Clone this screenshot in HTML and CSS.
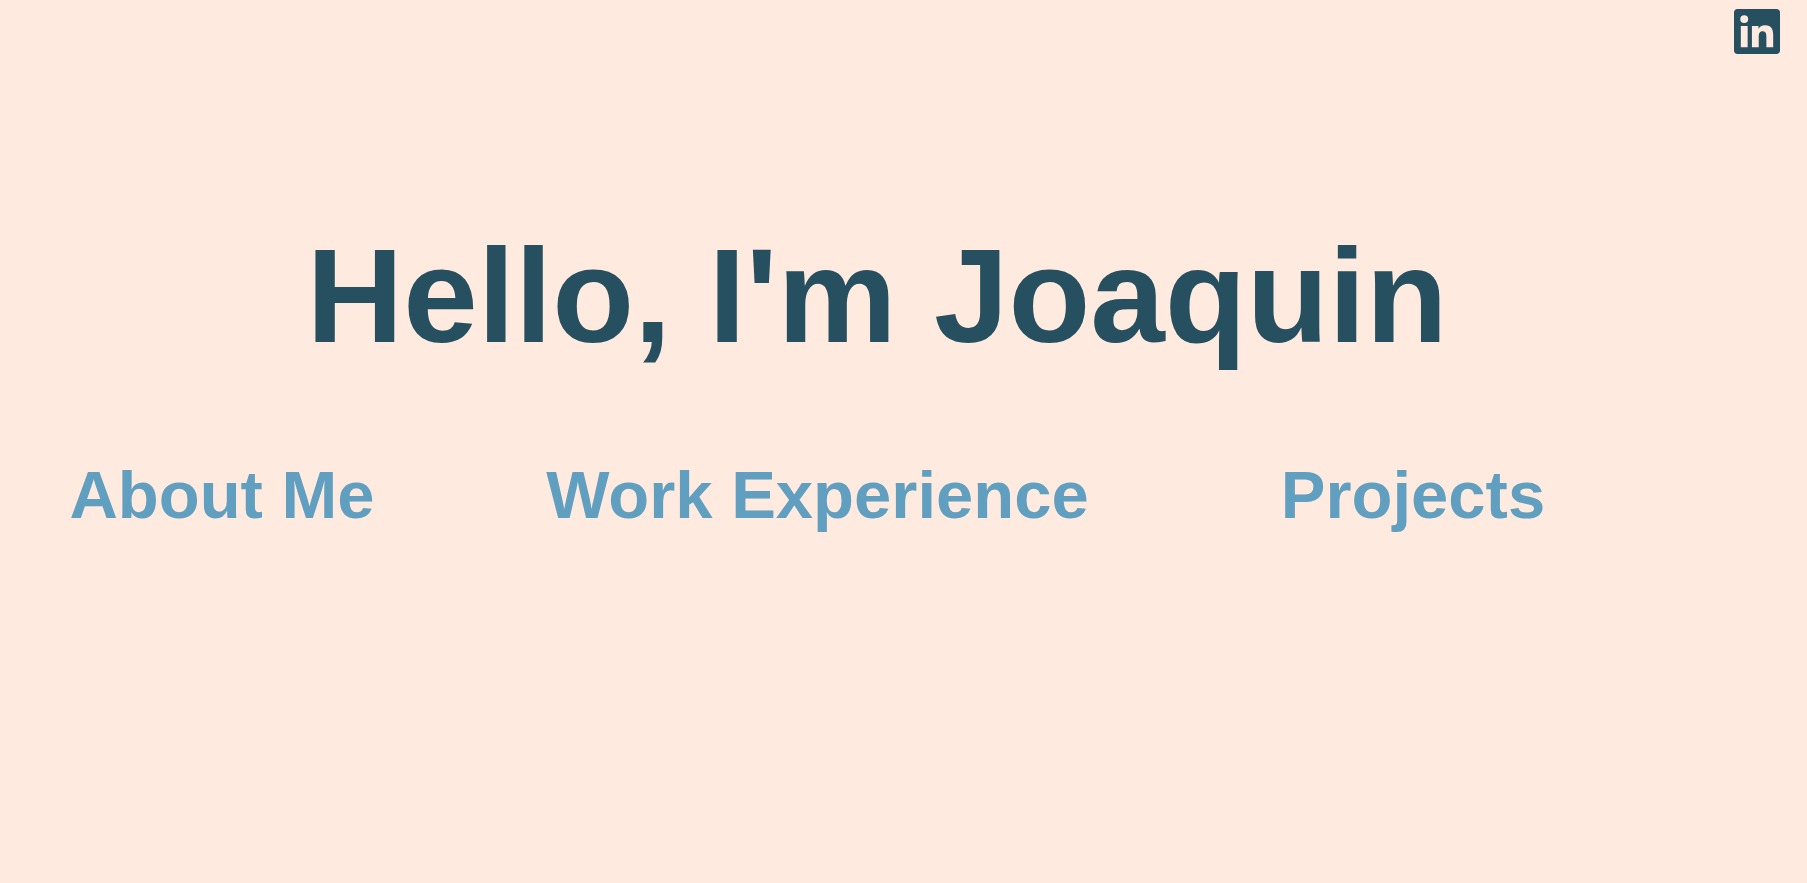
FILE: index.html
```html
<!DOCTYPE html>
<html lang="en">
<head>
<meta charset="utf-8">
<meta name="viewport" content="width=device-width, initial-scale=1">
<title>Joaquin</title>
<link rel="stylesheet" href="styles.css">
</head>
<body class="page">
<header class="topbar">
<a class="social" href="#linkedin" aria-label="LinkedIn">
<svg class="social-icon" viewBox="0 0 24 24" preserveAspectRatio="none" aria-hidden="true"><path fill="currentColor" d="M20.447 20.452h-3.554v-5.569c0-1.328-.027-3.037-1.852-3.037-1.853 0-2.136 1.445-2.136 2.939v5.667H9.351V9h3.414v1.561h.046c.477-.9 1.637-1.85 3.37-1.85 3.601 0 4.267 2.37 4.267 5.455v6.286zM5.337 7.433a2.062 2.062 0 0 1-2.063-2.065 2.064 2.064 0 1 1 2.063 2.065zm1.782 13.019H3.555V9h3.564v11.452zM22.225 0H1.771C.792 0 0 .774 0 1.729v20.542C0 23.227.792 24 1.771 24h20.451C23.2 24 24 23.227 24 22.271V1.729C24 .774 23.2 0 22.222 0h.003z"/></svg>
</a>
</header>
<main>
<h1 class="title">Hello, I'm Joaquin</h1>
<nav class="menu" aria-label="Main">
<a class="menu-link" href="#about">About Me</a>
<a class="menu-link" href="#work">Work Experience</a>
<a class="menu-link" href="#projects">Projects</a>
</nav>
</main>
</body>
</html>
```
FILE: styles.css
```css
.page {
  margin: 0;
  background: #feeadf;
  color: #265060;
  font-family: Arial, "Liberation Sans", sans-serif;
  font-weight: bold;
}

.topbar {
  display: flex;
  justify-content: flex-end;
  padding: 9px 27px 0 0;
}

.social {
  display: block;
  color: inherit;
}

.social-icon {
  display: block;
  width: 46px;
  height: 45px;
}

.title {
  margin: 167px 0 84px;
  padding-right: 53px;
  font-size: 134px;
  line-height: 150px;
  text-align: center;
}

.menu {
  display: grid;
  grid-template-columns: 444fr 595fr 444fr;
  column-gap: 76px;
  justify-items: center;
  padding-right: 172px;
}

.menu-link {
  color: #609fbf;
  font-size: 67px;
  line-height: 80px;
  text-decoration: none;
  white-space: nowrap;
}
```
